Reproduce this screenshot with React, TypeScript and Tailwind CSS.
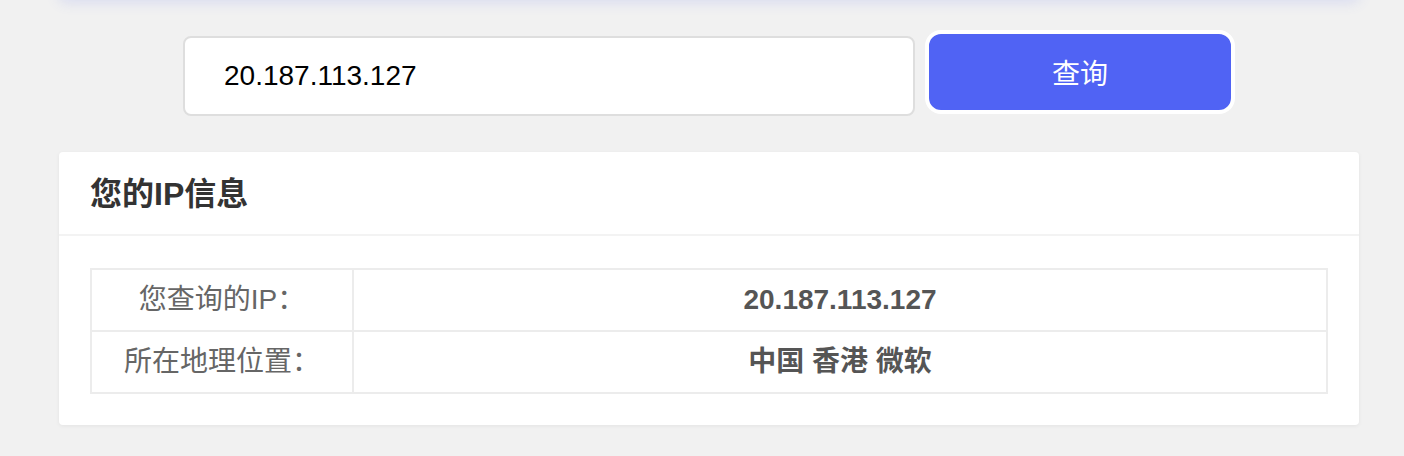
import React from 'react';

const rows = [
  { label: '您查询的IP：', value: '20.187.113.127' },
  { label: '所在地理位置：', value: '中国 香港 微软' },
];

export default function App() {
  return (
    <div className="min-h-screen flex flex-col bg-[#f1f1f1] font-['Liberation_Sans','Noto_Sans_CJK_SC',sans-serif]">
      <div className="w-[1300px] ml-[59px]">
        {/* bottom edge of the panel above, only its shadow shows */}
        <div className="h-[20px] -mt-[20px] rounded-b-md bg-[#eef0f8] shadow-[0_2px_14px_rgba(80,98,245,0.16)]" />

        <div className="flex justify-center items-start gap-[10px] pt-[30px]">
          <input
            defaultValue="20.187.113.127"
            className="mt-[6px] w-[732px] h-[80px] rounded-[8px] border-2 border-[#dedede] bg-white pl-[39px] text-[28px] text-black outline-none"
          />
          <button className="w-[310px] h-[84px] pt-[6px] rounded-[16px] border-4 border-white bg-[#5063f4] text-[28px] text-white">
            查询
          </button>
        </div>

        <div className="mt-[36px] rounded-[4px] bg-white shadow-[0_1px_4px_rgba(0,0,0,0.06)]">
          <div className="h-[84px] flex items-center pt-[2px] px-[31px] border-b-2 border-[#f3f3f3] text-[32px] font-bold text-[#333]">
            您的IP信息
          </div>
          <div className="px-[31px] pt-[32px] pb-[31px]">
            <table className="w-full border-collapse border-2 border-[#ececec]">
              <tbody>
                {rows.map((r) => (
                  <tr key={r.label} className="h-[62px]">
                    <td className="w-[262px] border-2 border-[#ececec] text-center text-[28px] text-[#666]">
                      {r.label}
                    </td>
                    <td className="border-2 border-[#ececec] text-center text-[28px] font-bold text-[#555]">
                      {r.value}
                    </td>
                  </tr>
                ))}
              </tbody>
            </table>
          </div>
        </div>
      </div>
    </div>
  );
}
